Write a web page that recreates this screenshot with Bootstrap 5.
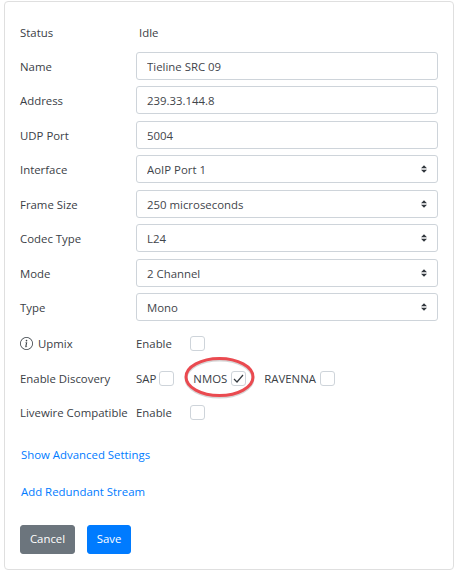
<!DOCTYPE html>
<html lang="en">
<head>
<meta charset="utf-8">
<title>Stream settings</title>
<link rel="stylesheet" href="https://cdn.jsdelivr.net/npm/bootstrap@5.3.0/dist/css/bootstrap.min.css">
<style>
html, body { background: #fff; }
body { font-family: "Open Sans", "Liberation Sans", sans-serif; font-size: 11.4px; color: #3a4046; width: 458px; height: 573px; overflow: hidden; }
.shell { margin: 1px 4px 0 4px; height: 569px; border: 1px solid #dfdfdf; border-radius: 4px; padding: 16px 15px 0 15px; position: relative; }
.fld { height: 28px; margin-bottom: 6.5px; }
.fld-first { margin-bottom: 5.5px; }
.fld-last { margin-bottom: 5.5px; }
.lbl { width: 116px; flex: none; white-space: nowrap; }
.fld .lbl, .fld .val { padding-top: 1.5px; }
.shell .form-control, .shell .form-select { font-size: 11.4px; height: 28px; min-height: 28px; padding: 1px 10px 0; color: #3f454b; border: 1px solid #ced4da; border-radius: 3px; width: 302px; flex: none; line-height: 25px; }
.shell .form-select { background-image: url("data:image/svg+xml,%3csvg xmlns='http://www.w3.org/2000/svg' viewBox='0 0 4 5'%3e%3cpath fill='%23343a40' d='M2 0L0 2h4zm0 5L0 3h4z'/%3e%3c/svg%3e"); background-size: 6px 8px; background-position: right 10px center; }
.val { padding-left: 3px; }
.chkrow { height: 34.5px; margin: 0; }
.box { width: 15px; height: 15px; border: 1px solid #ced4da; border-radius: 3px; margin: 0; flex: none; display: flex; align-items: center; justify-content: center; background: #fff; }
.en { width: 54px; flex: none; }
.pair { display: flex; align-items: center; gap: 3px; }
.pair-n { gap: 4px; }
.pair-r { gap: 4px; }
.pair-n { margin-left: 19px; }
.pair-r { margin-left: 18px; }
.info { width: 13px; height: 13px; margin-right: 5px; vertical-align: -2px; }
.lnk { color: #007bff; text-decoration: none; display: block; height: 20px; line-height: 20px; padding-left: 1px; }
.lnk-a { margin-top: 14.5px; }
.lnk-b { margin-top: 17px; }
.acts { margin-top: 23px; gap: 12px; }
.acts .btn { font-size: 11.4px; height: 29px; padding: 0; border-radius: 3px; display: flex; align-items: center; justify-content: center; }
.btn-cancel { width: 55px; }
.acts .btn-save { width: 44px; background: #007bff; border-color: #007bff; }
.ring { position: absolute; left: 179px; top: 355px; width: 72px; height: 44px; pointer-events: none; overflow: visible; }
</style>
</head>
<body>
<div class="shell">
  <div class="d-flex align-items-center fld fld-first"><div class="lbl">Status</div><div class="val">Idle</div></div>
  <div class="d-flex align-items-center fld"><label class="lbl" for="n">Name</label><input id="n" class="form-control" value="Tieline SRC 09"></div>
  <div class="d-flex align-items-center fld"><label class="lbl" for="a">Address</label><input id="a" class="form-control" value="239.33.144.8"></div>
  <div class="d-flex align-items-center fld"><label class="lbl" for="u">UDP Port</label><input id="u" class="form-control" value="5004"></div>
  <div class="d-flex align-items-center fld"><label class="lbl" for="i">Interface</label><select id="i" class="form-select"><option>AoIP Port 1</option></select></div>
  <div class="d-flex align-items-center fld"><label class="lbl" for="f">Frame Size</label><select id="f" class="form-select"><option>250 microseconds</option></select></div>
  <div class="d-flex align-items-center fld"><label class="lbl" for="c">Codec Type</label><select id="c" class="form-select"><option>L24</option></select></div>
  <div class="d-flex align-items-center fld"><label class="lbl" for="m">Mode</label><select id="m" class="form-select"><option>2 Channel</option></select></div>
  <div class="d-flex align-items-center fld fld-last"><label class="lbl" for="t">Type</label><select id="t" class="form-select"><option>Mono</option></select></div>
  <div class="d-flex align-items-center chkrow">
    <div class="lbl"><svg class="info" viewBox="0 0 16 16" fill="#3a4046"><path d="M8 15A7 7 0 1 1 8 1a7 7 0 0 1 0 14zm0 1A8 8 0 1 0 8 0a8 8 0 0 0 0 16z"/><path d="M8.93 6.59l-2.29.29-.08.38.45.08c.29.07.35.18.29.47l-.74 3.47c-.19.9.11 1.32.81 1.32.55 0 1.18-.25 1.47-.6l.09-.42c-.2.18-.5.25-.69.25-.27 0-.37-.19-.3-.53zM9 4.5a1 1 0 1 1-2 0 1 1 0 0 1 2 0z"/></svg>Upmix</div>
    <div class="en">Enable</div><span class="box"></span>
  </div>
  <div class="d-flex align-items-center chkrow">
    <div class="lbl">Enable Discovery</div>
    <div class="pair"><span>SAP</span><span class="box"></span></div>
    <div class="pair pair-n"><span>NMOS</span><span class="box"><svg width="11" height="11" viewBox="0 0 11 11"><path d="M1 6l3 3 6-7" fill="none" stroke="#343a40" stroke-width="1.2"/></svg></span></div>
    <div class="pair pair-r"><span>RAVENNA</span><span class="box"></span></div>
  </div>
  <div class="d-flex align-items-center chkrow">
    <div class="lbl">Livewire Compatible</div>
    <div class="en">Enable</div><span class="box"></span>
  </div>
  <a class="lnk lnk-a" href="#">Show Advanced Settings</a>
  <a class="lnk lnk-b" href="#">Add Redundant Stream</a>
  <div class="d-flex acts">
    <button type="button" class="btn btn-secondary btn-cancel">Cancel</button>
    <button type="button" class="btn btn-primary btn-save">Save</button>
  </div>
  <svg class="ring" viewBox="0 0 72 44"><ellipse cx="35.5" cy="21.5" rx="33.5" ry="18.5" fill="none" stroke="#000" stroke-opacity=".16" stroke-width="3"/><ellipse cx="35.5" cy="20" rx="33.5" ry="18.5" fill="none" stroke="#ea4a50" stroke-width="3"/></svg>
</div>
<script src="https://cdn.jsdelivr.net/npm/bootstrap@5.3.0/dist/js/bootstrap.bundle.min.js"></script>
</body>
</html>
